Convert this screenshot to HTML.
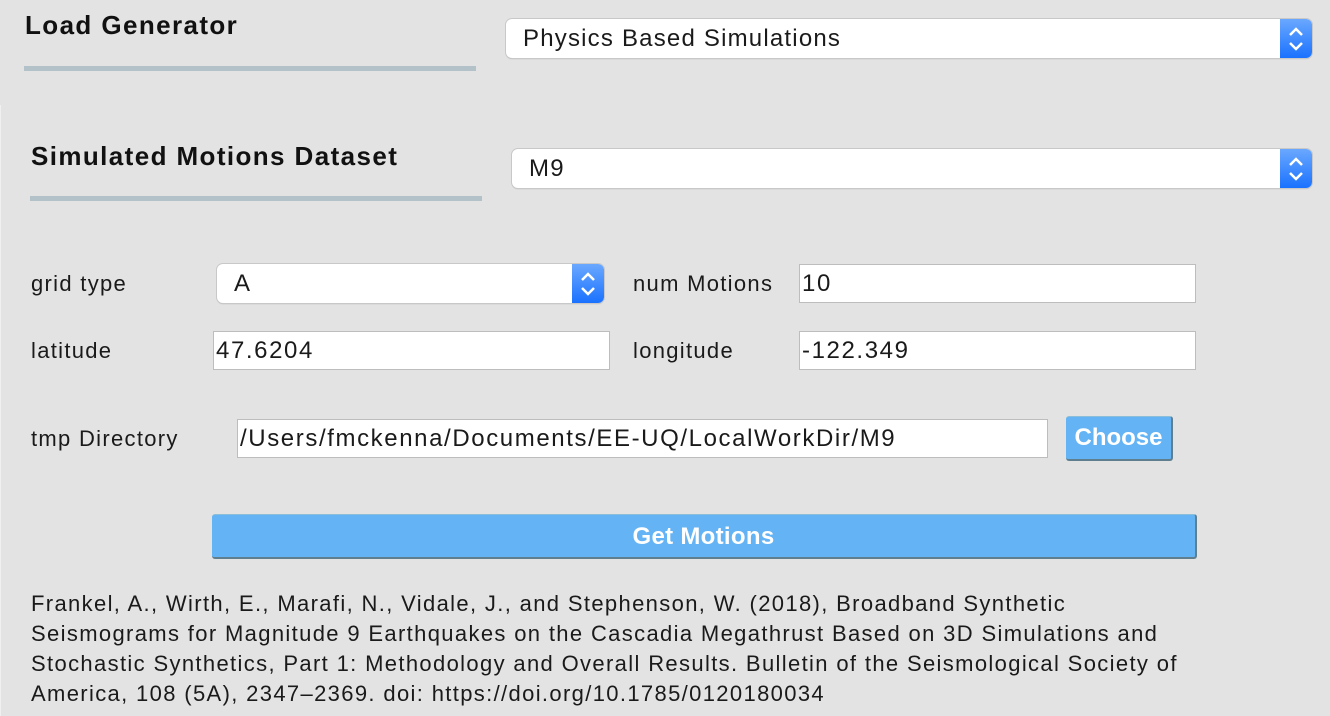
<!DOCTYPE html>
<html><head><meta charset="utf-8"><style>
*{margin:0;padding:0;box-sizing:border-box}
body{width:1330px;height:716px;background:#e3e3e3;font-family:"Liberation Sans",sans-serif;color:#1a1a1a;position:relative;overflow:hidden}
.a{position:absolute;white-space:nowrap}
.h{font-weight:bold;font-size:26px;color:#111;letter-spacing:1.4px}
.bar{background:#b3c1c8;height:5px}
.combo{background:#fff;border-radius:6px;box-shadow:0 0 0 1px #c8c8c8,0 1px 1px #aaa;font-size:24px;letter-spacing:1.2px;overflow:hidden}
.combo span{position:absolute;top:50%;transform:translateY(-50%)}
.btnb{position:absolute;right:0;top:0;bottom:0;width:32px;background:linear-gradient(#6aa8ff,#1a72ff)}
.lbl{font-size:22px;letter-spacing:1.3px;color:#1a1a1a}
.inp{background:#fff;border:1px solid #bdbdbd;font-size:24px;letter-spacing:1.6px;padding-left:2px;line-height:37px}
.bl{background:#63b3f5;border-radius:3px;border-top:1px solid #8bbfd9;border-right:2px solid #5f7f8f;border-bottom:2px solid #5f7f8f;color:#fff;font-weight:bold;text-align:center}
.cit{font-size:22px;letter-spacing:1.35px;left:31px}
</style></head><body>
<div style="position:absolute;left:0;top:105px;width:1px;height:611px;background:#f0f0f0"></div>
<div class="a h" style="left:25px;top:10px">Load Generator</div>
<div class="a bar" style="left:24px;top:66px;width:452px"></div>
<div class="a combo" style="left:506px;top:19px;width:806px;height:39px"><span style="left:17px">Physics Based Simulations</span><div class="btnb"><svg width="32" height="39" viewBox="0 0 32 39"><path d="M10 16l6-6 6 6M10 24l6 6 6-6" stroke="#fff" stroke-width="2.5" fill="none"/></svg></div></div>

<div class="a h" style="left:31px;top:141px">Simulated Motions Dataset</div>
<div class="a bar" style="left:30px;top:196px;width:452px"></div>
<div class="a combo" style="left:512px;top:149px;width:800px;height:39px"><span style="left:17px">M9</span><div class="btnb"><svg width="32" height="39" viewBox="0 0 32 39"><path d="M10 16l6-6 6 6M10 24l6 6 6-6" stroke="#fff" stroke-width="2.5" fill="none"/></svg></div></div>

<div class="a lbl" style="left:31px;top:271px">grid type</div>
<div class="a combo" style="left:217px;top:264px;width:387px;height:39px"><span style="left:17px">A</span><div class="btnb"><svg width="32" height="39" viewBox="0 0 32 39"><path d="M10 16l6-6 6 6M10 24l6 6 6-6" stroke="#fff" stroke-width="2.5" fill="none"/></svg></div></div>
<div class="a lbl" style="left:633px;top:271px">num Motions</div>
<div class="a inp" style="left:799px;top:264px;width:397px;height:39px">10</div>

<div class="a lbl" style="left:31px;top:338px">latitude</div>
<div class="a inp" style="left:213px;top:331px;width:397px;height:39px">47.6204</div>
<div class="a lbl" style="left:633px;top:338px">longitude</div>
<div class="a inp" style="left:799px;top:331px;width:397px;height:39px">-122.349</div>

<div class="a lbl" style="left:31px;top:426px">tmp Directory</div>
<div class="a inp" style="left:237px;top:419px;width:811px;height:39px">/Users/fmckenna/Documents/EE-UQ/LocalWorkDir/M9</div>
<div class="a bl" style="left:1066px;top:416px;width:107px;height:45px;font-size:24px;line-height:42px">Choose</div>

<div class="a bl" style="left:212px;top:514px;width:985px;height:45px;font-size:24px;letter-spacing:0.3px;line-height:44px">Get Motions</div>

<div class="a cit" style="top:591px">Frankel, A., Wirth, E., Marafi, N., Vidale, J., and Stephenson, W. (2018), Broadband Synthetic</div>
<div class="a cit" style="top:621px">Seismograms for Magnitude 9 Earthquakes on the Cascadia Megathrust Based on 3D Simulations and</div>
<div class="a cit" style="top:651px">Stochastic Synthetics, Part 1: Methodology and Overall Results. Bulletin of the Seismological Society of</div>
<div class="a cit" style="top:681px">America, 108 (5A), 2347–2369. doi: https://doi.org/10.1785/0120180034</div>
</body></html>
